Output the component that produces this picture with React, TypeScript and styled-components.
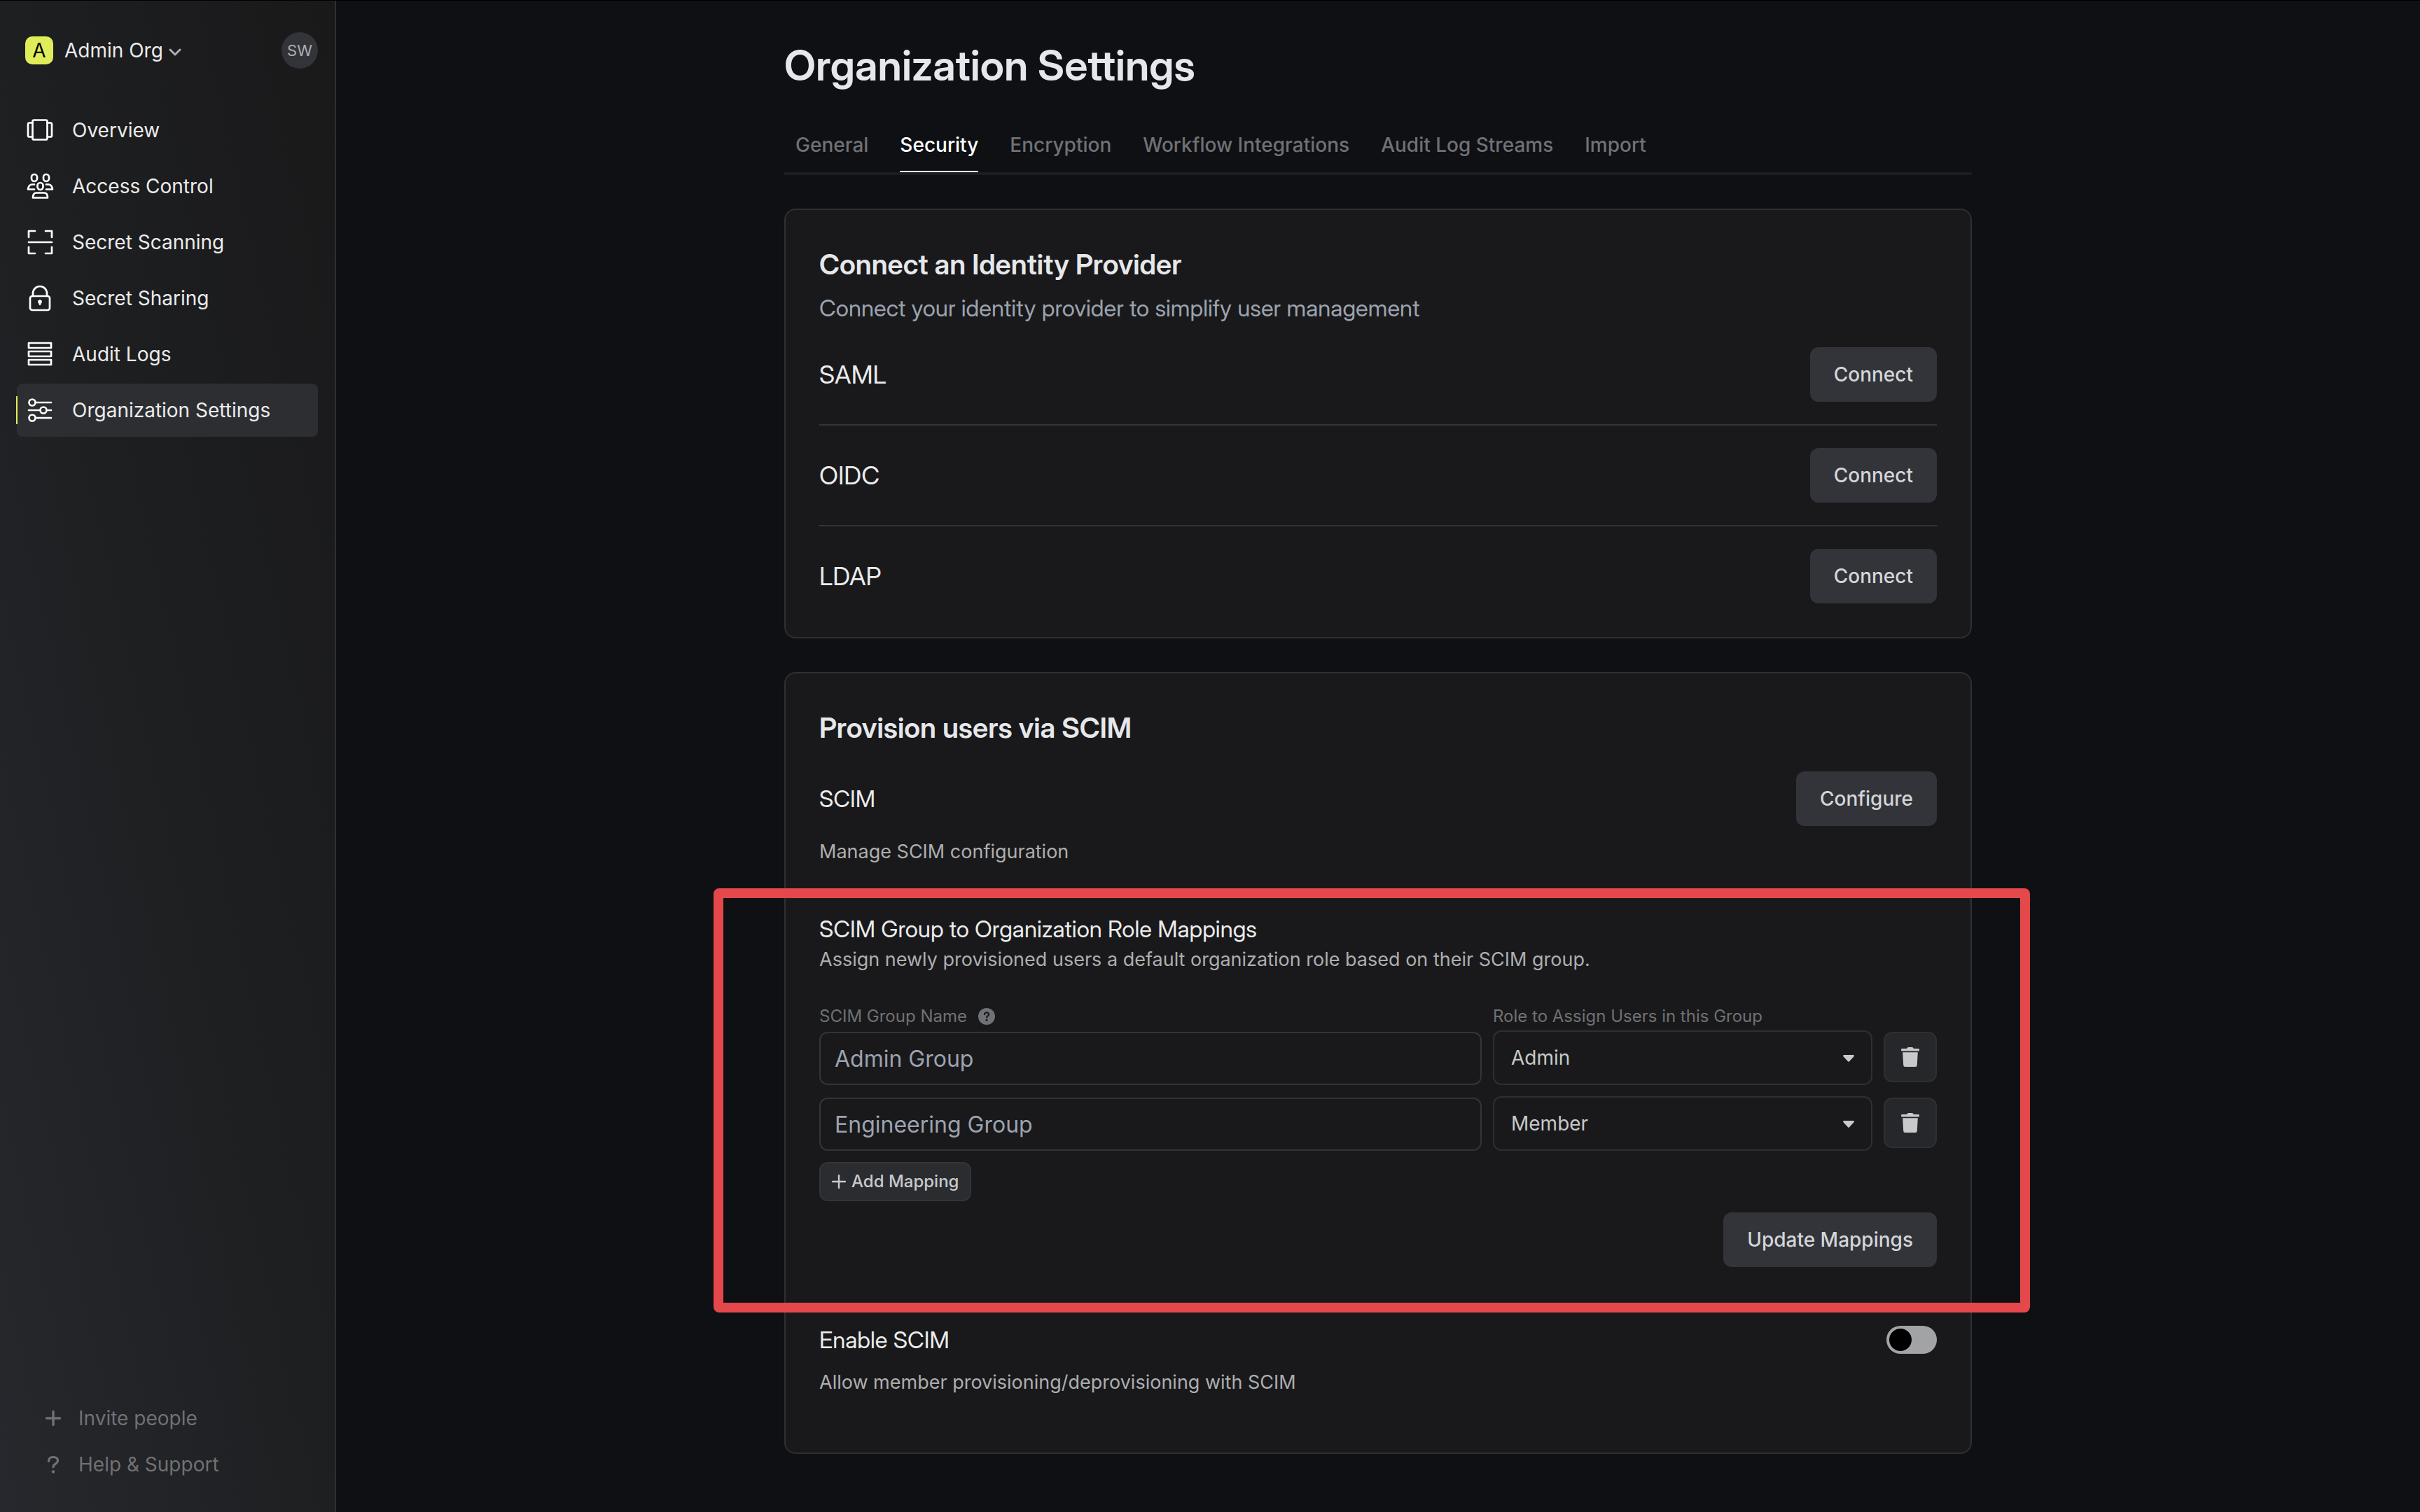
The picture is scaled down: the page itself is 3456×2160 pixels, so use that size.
import React, { useState } from "react";
import styled, { createGlobalStyle, css } from "styled-components";

const color = {
  page: "#0e1014",
  card: "#19191b",
  line: "#2d2f33",
  control: "#323439",
  muted: "#707174",
  soft: "#adaeb0",
  text: "#ebebeb",
  slate: "#9ca3af",
  lime: "#e0ed5b",
  alert: "#e5484b",
};

/* The display cut of Inter, used for headings and lead text. */
const display = css`
  font-family: "Inter Display", Inter, "Liberation Sans", sans-serif;
`;

const GlobalStyle = createGlobalStyle`
  *, *::before, *::after { box-sizing: border-box; }
  html { background: ${color.page}; }
  body {
    margin: 0;
    font-family: Inter, "Liberation Sans", sans-serif;
    font-size: 28px;
    line-height: 40px;
    color: ${color.text};
    -webkit-font-smoothing: antialiased;
  }
  h1, h2, h3, p { margin: 0; }
  button, input, select { font: inherit; color: inherit; margin: 0; }
  button { cursor: pointer; }
`;

const Shell = styled.div`
  display: flex;
  min-height: 100vh;
  border-top: 1px solid #000;
`;

const Sidebar = styled.aside`
  display: flex;
  flex-direction: column;
  flex: none;
  width: 480px;
  padding: 45px 24px 48px;
  border-right: 2px solid ${color.line};
  background: linear-gradient(to top right, #27282d, #1e1f21 50%, #19191a);
`;

const OrgBar = styled.header`
  display: flex;
  align-items: center;
  justify-content: space-between;
  height: 52px;
  padding-left: 12px;
  margin-bottom: 50px;
`;

const OrgSwitch = styled.button`
  display: flex;
  align-items: center;
  padding: 0;
  border: 0;
  background: none;
  color: ${color.text};
`;

const OrgBadge = styled.span`
  width: 40px;
  height: 40px;
  margin-right: 16px;
  border-radius: 10px;
  background: ${color.lime};
  color: #000;
  text-align: center;
`;

const Chevron = styled.svg`
  margin: 6px 0 0 8px;
`;

const Avatar = styled.button`
  width: 52px;
  height: 52px;
  padding: 0;
  border: 0;
  border-radius: 50%;
  background: ${color.control};
  color: ${color.soft};
  font-size: 22px;
`;

const Nav = styled.nav`
  display: flex;
  flex-direction: column;
  gap: 4px;
`;

const NavLink = styled.a<{ $active?: boolean }>`
  position: relative;
  display: flex;
  align-items: center;
  gap: 25px;
  height: 76px;
  padding: 0 12px;
  border-radius: 8px;
  color: ${color.text};
  text-decoration: none;
  background: ${(p) => (p.$active ? "#2d2e32" : "transparent")};

  &::before {
    content: "";
    display: ${(p) => (p.$active ? "block" : "none")};
    position: absolute;
    left: -1px;
    top: 18px;
    width: 2px;
    height: 40px;
    background: ${color.lime};
  }
`;

const NavIcon = styled.svg`
  flex: none;
  width: 42px;
  height: 42px;
  fill: none;
  stroke: #fff;
  stroke-width: 2.7px;
  stroke-linecap: round;
  stroke-linejoin: round;
`;

const FootLinks = styled.div`
  display: flex;
  flex-direction: column;
  gap: 26px;
  margin-top: auto;
  padding: 0 38px;
`;

const FootLink = styled.button`
  display: flex;
  align-items: center;
  gap: 22px;
  padding: 0;
  border: 0;
  background: none;
  color: ${color.muted};
`;

const Main = styled.main`
  flex: 1;
  min-width: 0;
  padding: 56px 48px 16px;
`;

const Content = styled.div`
  max-width: 1696px;
  margin: 0 auto;
`;

const Title = styled.h1`
  ${display}
  font-size: 60px;
  line-height: 72px;
  font-weight: 600;
  color: #e6e7ea;
`;

const Tabs = styled.div`
  display: flex;
  gap: 45px;
  height: 90px;
  margin: 31px 0 48px;
  padding: 0 16px;
  border-bottom: 4px solid #1b1d21;
`;

const Tab = styled.button<{ $active?: boolean }>`
  padding: 10px 0 0;
  border: 0;
  border-bottom: 2px solid ${(p) => (p.$active ? "#fff" : "transparent")};
  background: none;
  font-weight: 500;
  color: ${(p) => (p.$active ? "#fff" : color.muted)};
`;

const Card = styled.section`
  margin-bottom: 48px;
  padding: 48px;
  border: 2px solid ${color.line};
  border-radius: 16px;
  background: ${color.card};
`;

const CardTitle = styled.h2`
  ${display}
  font-size: 40px;
  line-height: 60px;
  font-weight: 600;
  color: #e6e7ea;
`;

const CardLead = styled.p`
  ${display}
  margin: 8px 0 32px;
  font-size: 33px;
  line-height: 48px;
  color: ${color.slate};
`;

const Row = styled.div`
  display: flex;
  align-items: center;
  justify-content: space-between;
`;

const ProviderList = styled.div`
  display: flex;
  flex-direction: column;
`;

const ProviderRow = styled(Row)`
  & + & {
    margin-top: 32px;
    padding-top: 32px;
    border-top: 2px solid ${color.control};
  }
`;

const ProviderName = styled.h3`
  ${display}
  font-size: 36px;
  line-height: 48px;
  font-weight: 400;
`;

const Button = styled.button`
  height: 78px;
  padding: 0 34px;
  border: 0;
  border-radius: 12px;
  background: ${color.control};
  color: #d4d5d9;
  font-weight: 500;
`;

const ScimRow = styled(Row)`
  margin: 32px 0 17px;
`;

const ItemTitle = styled.h3`
  ${display}
  font-size: 33px;
  line-height: 48px;
  font-weight: 400;
`;

const ItemText = styled.p`
  font-size: 27px;
  color: ${color.soft};
`;

const MappingSection = styled.form`
  position: relative;
  margin: 66px 0 80px;
`;

const Highlight = styled.div`
  position: absolute;
  inset: -34px -133px -65px -151px;
  border: 14px solid ${color.alert};
  border-radius: 8px;
  pointer-events: none;
`;

const MappingGrid = styled.div`
  display: grid;
  grid-template-columns: minmax(0, 1fr) 542px 76px;
  column-gap: 16px;
  row-gap: 16px;
  align-items: center;
  margin-top: 41px;
`;

const FieldLabel = styled.label`
  display: flex;
  align-items: center;
  gap: 16px;
  height: 40px;
  margin-bottom: -16px;
  font-size: 24px;
  color: ${color.muted};
`;

const TextInput = styled.input`
  width: 100%;
  height: 76px;
  margin-top: 2px;
  padding: 0 20px;
  border: 2px solid ${color.control};
  border-radius: 12px;
  outline: none;
  background: transparent;
  font-size: 32px;
  color: ${color.slate};
`;

const SelectWrap = styled.div`
  position: relative;
  display: flex;
`;

const Select = styled.select`
  appearance: none;
  width: 100%;
  height: 78px;
  padding: 0 24px;
  border: 2px solid ${color.line};
  border-radius: 12px;
  outline: none;
  background: ${color.card};
  color: #c8c9ca;
`;

const Caret = styled.svg`
  position: absolute;
  right: 26px;
  top: 35px;
  width: 16px;
  height: 10px;
  fill: #c8c9ca;
  pointer-events: none;
`;

const IconButton = styled.button`
  display: flex;
  align-items: center;
  justify-content: center;
  align-self: start;
  height: 72px;
  margin-top: 2px;
  padding: 0;
  border: 2px solid ${color.line};
  border-radius: 12px;
  background: #25272b;
`;

const AddButton = styled.button`
  display: flex;
  align-items: center;
  gap: 8px;
  height: 56px;
  margin: 16px 0;
  padding: 0 16px;
  border: 2px solid ${color.control};
  border-radius: 12px;
  background: #2a2c30;
  color: #c8c9ca;
  font-size: 24px;
  font-weight: 500;
`;

const Actions = styled.div`
  display: flex;
  justify-content: flex-end;
`;

const EnableText = styled(ItemText)`
  margin: 17px 0 32px;
`;

const Switch = styled.input`
  appearance: none;
  display: flex;
  align-items: center;
  width: 72px;
  height: 40px;
  padding: 0 4px;
  border-radius: 20px;
  background: #a2a3a5;
  cursor: pointer;

  &::before {
    content: "";
    width: 32px;
    height: 32px;
    border-radius: 50%;
    background: #000;
  }

  &:checked { justify-content: flex-end; background: ${color.lime}; }
`;

const icons: Record<string, React.ReactNode> = {
  overview: (
    <>
      <rect x="10.500" y="6.500" width="21" height="28" rx="2" />
      <path d="M10.500 10.500H6a2 2 0 0 0-2 2v16a2 2 0 0 0 2 2h4.500M31.500 10.500H36a2 2 0 0 1 2 2v16a2 2 0 0 1-2 2h-4.500" />
    </>
  ),
  access: (
    <>
      <rect x="9" y="4" width="8" height="10" rx="4" />
      <rect x="26" y="4" width="8" height="10" rx="4" />
      <rect x="17.500" y="16" width="8" height="10" rx="4" />
      <path d="M13 18.500H10q-5 0-6 7h9M30 18.500h3q5 0 6 7h-9M11 37.500h21q0-7-5-7H16q-5 0-5 7z" />
    </>
  ),
  scan: (
    <path d="M5 14V5h9M29 5h9v9M5 28v9h9M29 37h9v-9M5 21h33" />
  ),
  lock: (
    <>
      <rect x="7" y="18" width="28" height="20" rx="3" />
      <path d="M11 18v-4a10 10 0 0 1 20 0v4" />
      <circle cx="21" cy="26" r="1.500" fill="#fff" />
      <path d="M21 26v4" />
    </>
  ),
  logs: (
    <>
      <rect x="5" y="5" width="32" height="7" />
      <rect x="5" y="17" width="32" height="7" />
      <rect x="5" y="29" width="32" height="7" />
    </>
  ),
  settings: (
    <>
      <circle cx="10" cy="10" r="4.500" />
      <circle cx="26" cy="21" r="4.500" />
      <circle cx="10" cy="32" r="4.500" />
      <path d="M15 10h22M5 21h16M31 21h6M15 32h22" />
    </>
  ),
};

const navItems = [
  { icon: "overview", label: "Overview" },
  { icon: "access", label: "Access Control" },
  { icon: "scan", label: "Secret Scanning" },
  { icon: "lock", label: "Secret Sharing" },
  { icon: "logs", label: "Audit Logs" },
  { icon: "settings", label: "Organization Settings", active: true },
];

const tabs = ["General", "Security", "Encryption", "Workflow Integrations", "Audit Log Streams", "Import"];

const TrashIcon = () => (
  <svg width="26" height="28" viewBox="0 0 26 28" fill="#c8c9ca" aria-hidden="true">
    <path d="M1.500 2h6.500l1-1.300A1.600 1.600 0 0 1 10.300 0h5.400a1.600 1.600 0 0 1 1.300.7L18 2h6.500a1.500 1.500 0 0 1 0 3.500h-23a1.500 1.500 0 0 1 0-3.500zM2.200 7.200h21.600l-1 18.300a2.600 2.600 0 0 1-2.600 2.500H5.800a2.600 2.600 0 0 1-2.600-2.500z" />
  </svg>
);

const HelpIcon = () => (
  <svg width="24" height="24" viewBox="0 0 24 24" role="img" aria-label="Help">
    <circle cx="12" cy="12" r="12" fill={color.muted} />
    <path d="M9 9.200c0-1.800 1.300-2.700 3-2.700s3.100 1 3.100 2.700c0 2.200-3 2.300-3 4.500" fill="none" stroke={color.card} strokeWidth="2.200" strokeLinecap="round" />
    <circle cx="12" cy="17.300" r="1.500" fill={color.card} />
  </svg>
);

export default function App() {
  const [tab, setTab] = useState("Security");
  const [enabled, setEnabled] = useState(false);
  const [mappings, setMappings] = useState([
    { id: 1, group: "Admin Group", role: "Admin" },
    { id: 2, group: "Engineering Group", role: "Member" },
  ]);

  const update = (id: number, change: object) =>
    setMappings((list) => list.map((m) => (m.id === id ? { ...m, ...change } : m)));

  return (
    <Shell>
      <GlobalStyle />
      <Sidebar>
        <OrgBar>
          <OrgSwitch>
            <OrgBadge>A</OrgBadge>
            Admin Org
            <Chevron width="18" height="12" viewBox="0 0 18 12" fill="none" stroke={color.soft} strokeWidth="3" strokeLinecap="round" strokeLinejoin="round">
              <path d="M2 2l7 7 7-7" />
            </Chevron>
          </OrgSwitch>
          <Avatar>SW</Avatar>
        </OrgBar>
        <Nav>
          {navItems.map((item) => (
            <NavLink key={item.label} href="#" $active={item.active}>
              <NavIcon viewBox="0 0 42 42" aria-hidden="true">{icons[item.icon]}</NavIcon>
              {item.label}
            </NavLink>
          ))}
        </Nav>
        <FootLinks>
          <FootLink>
            <svg width="28" height="28" viewBox="0 0 28 28" fill="none" stroke="currentColor" strokeWidth="3.400" strokeLinecap="round">
              <path d="M14 4.500v19M4.500 14h19" />
            </svg>
            Invite people
          </FootLink>
          <FootLink>
            <svg width="28" height="28" viewBox="0 0 28 28" fill="none" stroke="currentColor" strokeWidth="3.200" strokeLinecap="round" strokeLinejoin="round">
              <path d="M7.500 9.500C7.500 5 10 3.500 14 3.500c4.500 0 6.500 2.300 6.500 5.200 0 4.500-6.500 4.300-6.500 9" />
              <circle cx="14" cy="24.500" r="2.200" fill="currentColor" stroke="none" />
            </svg>
            Help &amp; Support
          </FootLink>
        </FootLinks>
      </Sidebar>

      <Main>
        <Content>
          <Title>Organization Settings</Title>
          <Tabs role="tablist">
            {tabs.map((name) => (
              <Tab key={name} role="tab" aria-selected={tab === name} $active={tab === name} onClick={() => setTab(name)}>
                {name}
              </Tab>
            ))}
          </Tabs>

          <Card>
            <CardTitle>Connect an Identity Provider</CardTitle>
            <CardLead>Connect your identity provider to simplify user management</CardLead>
            <ProviderList>
              {["SAML", "OIDC", "LDAP"].map((name) => (
                <ProviderRow key={name}>
                  <ProviderName>{name}</ProviderName>
                  <Button>Connect</Button>
                </ProviderRow>
              ))}
            </ProviderList>
          </Card>

          <Card>
            <CardTitle>Provision users via SCIM</CardTitle>
            <ScimRow>
              <ItemTitle>SCIM</ItemTitle>
              <Button>Configure</Button>
            </ScimRow>
            <ItemText>Manage SCIM configuration</ItemText>

            <MappingSection onSubmit={(e) => e.preventDefault()}>
              <ItemTitle>SCIM Group to Organization Role Mappings</ItemTitle>
              <ItemText>Assign newly provisioned users a default organization role based on their SCIM group.</ItemText>
              <MappingGrid>
                <FieldLabel htmlFor="group-1">
                  SCIM Group Name
                  <HelpIcon />
                </FieldLabel>
                <FieldLabel htmlFor="role-1">Role to Assign Users in this Group</FieldLabel>
                <span />
                {mappings.map((m) => (
                  <React.Fragment key={m.id}>
                    <TextInput
                      id={`group-${m.id}`}
                      aria-label="SCIM Group Name"
                      value={m.group}
                      onChange={(e) => update(m.id, { group: e.target.value })}
                    />
                    <SelectWrap>
                      <Select
                        id={`role-${m.id}`}
                        aria-label="Role to Assign Users in this Group"
                        value={m.role}
                        onChange={(e) => update(m.id, { role: e.target.value })}
                      >
                        <option>Admin</option>
                        <option>Member</option>
                      </Select>
                      <Caret viewBox="0 0 16 10" aria-hidden="true">
                        <path d="M1.500 0h13a1.300 1.300 0 0 1 1 2.200L9 9.300a1.400 1.400 0 0 1-2 0L.5 2.200A1.300 1.300 0 0 1 1.500 0z" />
                      </Caret>
                    </SelectWrap>
                    <IconButton
                      type="button"
                      aria-label={`Delete ${m.group}`}
                      onClick={() => setMappings((list) => list.filter((x) => x.id !== m.id))}
                    >
                      <TrashIcon />
                    </IconButton>
                  </React.Fragment>
                ))}
              </MappingGrid>
              <AddButton
                type="button"
                onClick={() => setMappings((list) => [...list, { id: Date.now(), group: "", role: "Member" }])}
              >
                <svg width="20" height="20" viewBox="0 0 20 20" fill="none" stroke="currentColor" strokeWidth="2.400" strokeLinecap="round">
                  <path d="M10 1v18M1 10h18" />
                </svg>
                Add Mapping
              </AddButton>
              <Actions>
                <Button type="submit">Update Mappings</Button>
              </Actions>
              <Highlight />
            </MappingSection>

            <Row>
              <ItemTitle as="label" htmlFor="enable-scim">Enable SCIM</ItemTitle>
              <Switch id="enable-scim" type="checkbox" role="switch" checked={enabled} onChange={(e) => setEnabled(e.target.checked)} />
            </Row>
            <EnableText>Allow member provisioning/deprovisioning with SCIM</EnableText>
          </Card>
        </Content>
      </Main>
    </Shell>
  );
}
